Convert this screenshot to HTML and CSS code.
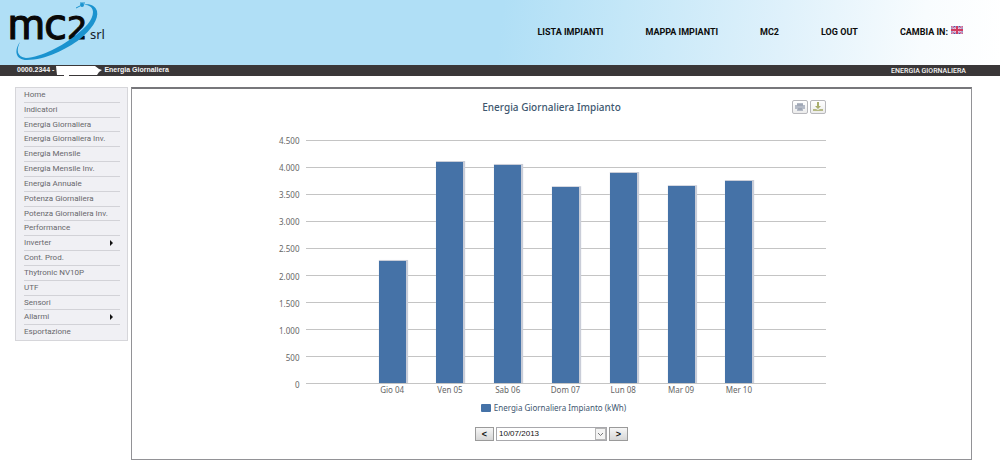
FILE: index.html
```html
<!DOCTYPE html>
<html lang="it">
<head>
<meta charset="utf-8">
<meta name="viewport" content="width=device-width, initial-scale=1">
<title>Energia Giornaliera</title>
<link rel="stylesheet" href="styles.css">
</head>
<body>
<header class="header">
  <a href="#" class="logo" aria-label="mc2 srl">
    <svg width="100" height="62" viewBox="0 0 100 62">
      <g class="logo-word">
        <text class="logo-m" x="-1" y="39" font-size="42">m</text>
        <text x="35" y="39" font-size="42">c</text>
        <text x="58" y="39" font-size="32">2</text>
      </g>
      <text class="logo-srl" x="81" y="39">srl</text>
      <path d="M11 42 C5 50 6 60 18 60 C36 60 58 49 71 39 C82 30 90 19 88 11 C86 5 80 3 73 5 C79 4 84 7 84 12 C84 20 76 28 67 35 C54 46 32 57 17 58 C8 57 7 50 11 42Z" fill="#1b93cf"/>
      <ellipse cx="73" cy="5" rx="2" ry="2" fill="#1b93cf"/>
      <path d="M67 8 L71 6 M71 3 H76" fill="none" stroke="#1b93cf"/>
    </svg>
  </a>
  <nav class="nav">
    <a href="#">LISTA IMPIANTI</a>
    <a href="#">MAPPA IMPIANTI</a>
    <a href="#">MC2</a>
    <a href="#">LOG OUT</a>
    <a href="#" class="lang">CAMBIA IN:
      <svg width="12" height="8" viewBox="0 0 12 8" aria-hidden="true">
        <rect width="12" height="8" fill="#4b50a5"/>
        <path d="M0 0 L12 8 M12 0 L0 8" stroke="#e3cfe5" stroke-width="2"/>
        <path d="M0 0 L12 8 M12 0 L0 8" stroke="#d0507c" stroke-width="1"/>
        <path d="M6 0 V8 M0 4 H12" stroke="#f3e2ee" stroke-width="3"/>
        <path d="M6 0 V8 M0 4 H12" stroke="#d13c62" stroke-width="2"/>
      </svg>
    </a>
  </nav>
</header>
<div class="crumbs">
  <div class="crumb-path">
    <span>0000.2344 -</span>
    <svg class="plant" width="46" height="11" viewBox="0 0 46 11" aria-hidden="true"><path d="M0 1 H39 L43 4 L46 5 L43 7 L41 10 H13 V11 H8 V10 H1Z" fill="#fff"/></svg>
    <span>Energia Giornaliera</span>
  </div>
  <span class="crumb-title">ENERGIA GIORNALIERA</span>
</div>
<div class="body">
  <nav class="menu">
    <ul>
      <li><a href="#">Home</a></li>
      <li><a href="#">Indicatori</a></li>
      <li><a href="#">Energia Giornaliera</a></li>
      <li><a href="#">Energia Giornaliera Inv.</a></li>
      <li><a href="#">Energia Mensile</a></li>
      <li><a href="#">Energia Mensile Inv.</a></li>
      <li><a href="#">Energia Annuale</a></li>
      <li><a href="#">Potenza Giornaliera</a></li>
      <li><a href="#">Potenza Giornaliera Inv.</a></li>
      <li><a href="#">Performance</a></li>
      <li><a href="#" class="sub">Inverter</a></li>
      <li><a href="#">Cont. Prod.</a></li>
      <li><a href="#">Thytronic NV10P</a></li>
      <li><a href="#">UTF</a></li>
      <li><a href="#">Sensori</a></li>
      <li><a href="#" class="sub">Allarmi</a></li>
      <li><a href="#">Esportazione</a></li>
    </ul>
  </nav>
  <main class="panel">
    <section class="chart">
      <div class="chart-head">
        <h1>Energia Giornaliera Impianto</h1>
        <div class="tools">
          <button type="button" aria-label="Stampa">
            <svg width="10" height="10" viewBox="0 0 10 10"><path d="M2 1 H8 V3 H10 V7 H8 V9 H2 V7 H0 V3 H2Z" fill="#b4bac6"/><path d="M2 3 H8 M3 7 H7" stroke="#8d95a5"/></svg>
          </button>
          <button type="button" aria-label="Scarica">
            <svg width="10" height="10" viewBox="0 0 10 10"><path d="M4 0 H6 V4 H8 L5 7 L2 4 H4Z" fill="#a9ae6c"/><path d="M0 7 H3 L5 8 L7 7 H10 V9 H0Z" fill="#b5b985"/></svg>
          </button>
        </div>
      </div>
      <div class="graph">
        <div class="scale">
          <span>4.500</span><span>4.000</span><span>3.500</span><span>3.000</span><span>2.500</span><span>2.000</span><span>1.500</span><span>1.000</span><span>500</span><span>0</span>
        </div>
        <div class="plot">
          <div class="col"></div>
          <div class="col"><div class="bar" style="height:50.3%"></div></div>
          <div class="col"><div class="bar" style="height:91%"></div></div>
          <div class="col"><div class="bar" style="height:89.8%"></div></div>
          <div class="col"><div class="bar" style="height:80.6%"></div></div>
          <div class="col"><div class="bar" style="height:86.4%"></div></div>
          <div class="col"><div class="bar" style="height:81%"></div></div>
          <div class="col"><div class="bar" style="height:83.1%"></div></div>
          <div class="col"></div>
        </div>
        <div class="days">
          <span></span><span>Gio 04</span><span>Ven 05</span><span>Sab 06</span><span>Dom 07</span><span>Lun 08</span><span>Mar 09</span><span>Mer 10</span><span></span>
        </div>
      </div>
      <div class="legend"><i class="swatch"></i>Energia Giornaliera Impianto (kWh)</div>
    </section>
    <form class="picker">
      <button type="button" aria-label="Giorno precedente">&lt;</button>
      <div class="date">
        <select aria-label="Data"><option>10/07/2013</option></select>
        <svg class="arrow" width="11" height="12" viewBox="0 0 11 12" aria-hidden="true"><rect x=".5" y=".5" width="10" height="11" fill="#f3f3f3" stroke="#b5b5b5"/><path d="M3 5 L5.500 7.500 L8 5" fill="none" stroke="#777"/></svg>
      </div>
      <button type="button" aria-label="Giorno successivo">&gt;</button>
    </form>
  </main>
</div>
</body>
</html>
```
FILE: styles.css
```css
* { box-sizing: border-box; }

body {
  margin: 0;
  background: #fff;
  font-family: "Liberation Sans", Arial, sans-serif;
}

a { color: inherit; text-decoration: none; }

.header {
  display: flex;
  justify-content: space-between;
  height: 65px;
  padding: 0 37px 0 9px;
  background: linear-gradient(97deg, #b0dff6 0%, #b0dff6 50%, #c4e7f8 62%, #dff1fb 78%, #f8fcfe 92%, #fff 100%);
}

.logo-word {
  font-family: "DejaVu Sans", sans-serif;
  fill: #080808;
  stroke: #080808;
}

.logo-m {
  font-family: Roboto, sans-serif;
  font-weight: 400;
}

.logo-srl {
  font-family: "Noto Sans", sans-serif;
  font-size: 13px;
  fill: #15202a;
}

.nav {
  display: flex;
  align-items: center;
  gap: 42px;
  padding-bottom: 2px;
  font: bold 9px/12px Roboto, sans-serif;
  color: #0c0c0c;
}

.lang { display: flex; gap: 3px; }

.crumbs {
  display: flex;
  justify-content: space-between;
  align-items: center;
  height: 11px;
  padding: 0 34px 0 17px;
  background: #3a3738;
  color: #f4f4f4;
  font-size: 7px;
  font-weight: bold;
  line-height: 10px;
}

.crumb-path { display: flex; gap: 2px; }
.plant { display: block; }
.crumb-title { font-family: Roboto, sans-serif; font-weight: 500; }

.body {
  display: flex;
  align-items: flex-start;
  gap: 3px;
  padding: 11px 28px 0 15px;
}

.menu {
  width: 113px;
  background: #f0f0f4;
  border: 1px solid #d6d6da;
}

.menu ul {
  display: grid;
  grid-auto-rows: 1fr;
  height: 252px;
  margin: 0;
  padding: 0 7px 0 8px;
  list-style: none;
}

.menu li { border-bottom: 1px solid #d2d2d7; }
.menu li:last-child { border-bottom: 0; }

.menu a {
  display: flex;
  align-items: center;
  justify-content: space-between;
  font: 8px/13px Roboto, sans-serif;
  color: #68686c;
}

.sub::after {
  content: "";
  margin-right: 7px;
  border: solid transparent;
  border-width: 3px 0 3px 3px;
  border-left-color: #111;
}

.panel {
  flex: 1;
  padding: 11px 8px 18px;
  border: 1px solid #929296;
  border-top: 2px solid #77777b;
}

.chart {
  max-width: 548px;
  margin: 0 auto;
  font-family: "Noto Sans", sans-serif;
}

.chart-head {
  display: grid;
  grid-template-columns: 1fr auto 1fr;
  align-items: center;
  height: 14px;
}

.chart-head h1 {
  grid-column: 2;
  margin: 0;
  font-size: 10px;
  line-height: 14px;
  font-weight: 500;
  color: #3e576f;
}

.tools { display: flex; justify-content: flex-end; gap: 2px; }

.tools button {
  display: grid;
  place-items: center;
  width: 16px;
  height: 14px;
  padding: 0;
  border: 1px solid #b8b8bc;
  border-radius: 2px;
  background: linear-gradient(#fff, #ececec);
}

.graph {
  display: grid;
  grid-template-columns: 22px 1fr;
  column-gap: 6px;
  padding-top: 26px;
}

.scale {
  display: flex;
  flex-direction: column;
  justify-content: space-between;
  height: 256px;
  margin: -5px 0 -7px;
  font-size: 8px;
  line-height: 12px;
  text-align: right;
  color: #666;
}

.plot {
  display: grid;
  grid-template-columns: repeat(9, 1fr);
  height: 244px;
  background: repeating-linear-gradient(#c4c4c4 0 1px, transparent 1px 27px);
}

.col {
  display: flex;
  align-items: flex-end;
  justify-content: center;
  padding-bottom: 1px;
}

.bar {
  width: 27px;
  background: #4572a7;
  box-shadow: 1px 0 1px 1px #c9cdd8;
  clip-path: inset(-1px -3px 0 -1px);
}

.days {
  grid-column: 2;
  display: grid;
  grid-template-columns: repeat(9, 1fr);
  font-size: 8px;
  line-height: 12px;
  text-align: center;
  color: #666;
}

.legend {
  display: flex;
  align-items: center;
  justify-content: center;
  gap: 3px;
  padding: 6px 0 0 4px;
  font-size: 8px;
  line-height: 12px;
  color: #3e576f;
}

.swatch { width: 10px; height: 8px; border-radius: 1px; background: #4572a7; }

.picker {
  display: flex;
  justify-content: center;
  gap: 2px;
  margin-top: 13px;
}

.picker button {
  width: 19px;
  height: 14px;
  padding: 0;
  border: 1px solid #9a9a9a;
  background: linear-gradient(#f6f6f6, #d6d6d6);
  font: bold 9px/10px "Liberation Sans", sans-serif;
  color: #111;
}

.date { position: relative; }

.date select {
  display: block;
  appearance: none;
  width: 111px;
  height: 14px;
  padding: 0 12px 0 2px;
  border: 1px solid #a8a8ac;
  border-radius: 0;
  background: #fff;
  font: 8px/12px "Liberation Sans", sans-serif;
  color: #111;
}

.arrow { position: absolute; top: 1px; right: 1px; pointer-events: none; }
```
